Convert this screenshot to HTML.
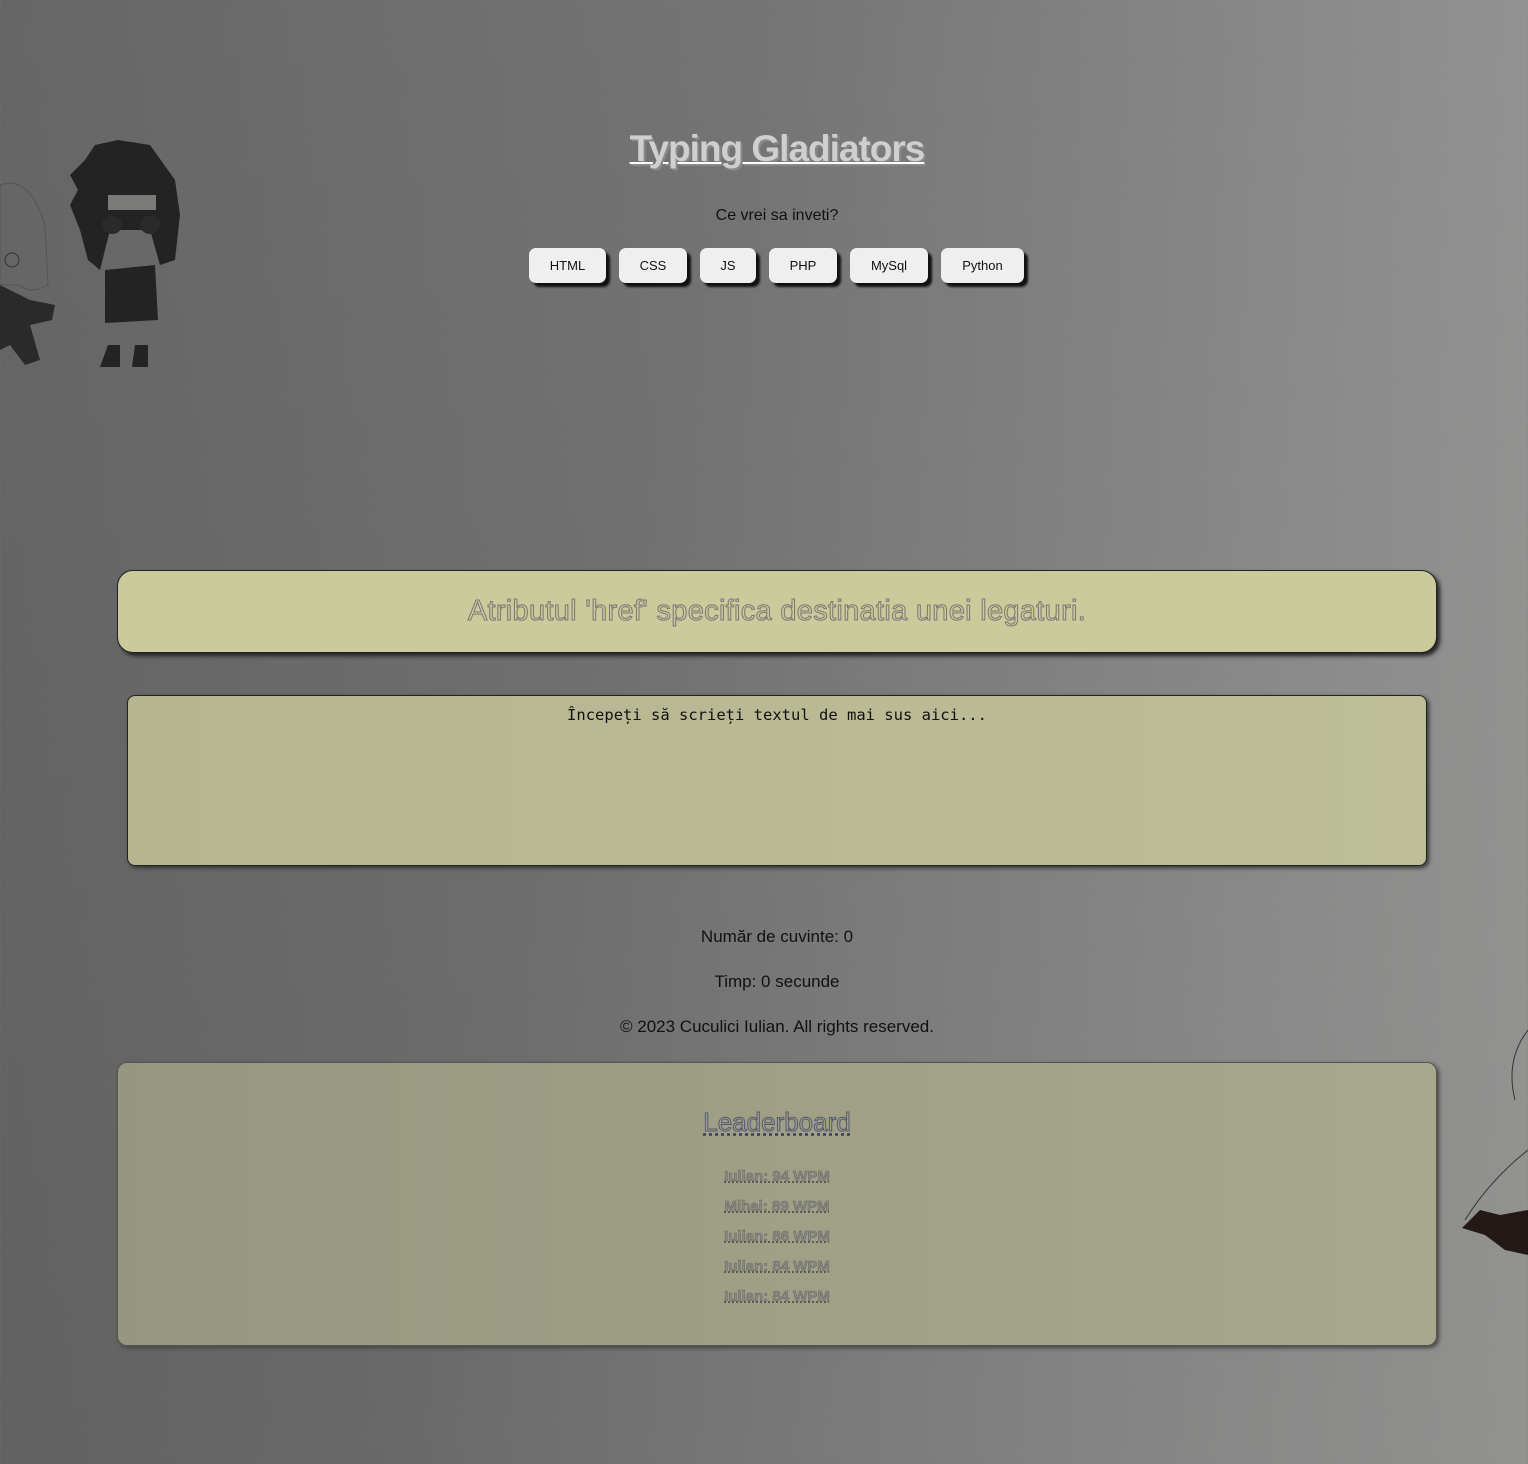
<!DOCTYPE html>
<html><head><meta charset="utf-8"><style>
html,body{margin:0;padding:0}
body{width:1528px;height:1464px;position:relative;overflow:hidden;
background:linear-gradient(105deg,#606060 0%,#6f6f6f 40%,#8a8a8a 75%,#9b9b99 100%);
font-family:"Liberation Sans",sans-serif;}
.ov{position:absolute;inset:0;background:linear-gradient(180deg,rgba(255,255,255,0.04),rgba(0,0,0,0.06));}
h1{position:absolute;top:128px;left:0;width:1554px;text-align:center;margin:0;font-size:37px;font-weight:bold;color:#cfcfcf;text-decoration:underline;text-decoration-color:#fff;text-decoration-thickness:2px;text-shadow:2px 2px 0 #888;letter-spacing:-1px}
.q{position:absolute;top:207px;left:0;width:1554px;text-align:center;font-size:16px;color:#111}
.btns{position:absolute;top:248px;left:529px;display:flex;gap:13px}
.btns div{height:35px;line-height:35px;background:#efefef;border-radius:7px;font-size:13px;color:#111;text-align:center;box-shadow:4px 4px 2px #111}
.quote{position:absolute;left:117px;top:570px;width:1318px;height:81px;background:#cbca9a;border:1px solid #222;border-radius:16px;box-shadow:3px 3px 4px #222;text-align:center;line-height:80px;font-size:29px;color:#cbca9a;-webkit-text-stroke:1px #777;letter-spacing:0.3px}
.ta{position:absolute;left:127px;top:695px;width:1300px;background:linear-gradient(90deg,#b5b591,#bdbe98);border:1px solid #222;border-radius:8px;box-shadow:2px 2px 4px #333;font-family:"DejaVu Sans Mono","Liberation Mono",monospace;font-size:15.5px;color:#111;text-align:center;padding-top:10px;box-sizing:border-box;height:171px}
.st{position:absolute;left:0;width:1554px;text-align:center;font-size:17px;color:#111}
.lb{position:absolute;left:117px;top:1062px;width:1318px;height:282px;background:linear-gradient(90deg,#979780,#a8a88c);border:1px solid #555;border-radius:10px;box-shadow:2px 2px 4px #444}
.lb h2{margin:0;position:absolute;top:44px;width:100%;text-align:center;font-size:26px;color:#a0a088;-webkit-text-stroke:1px #555a70;text-decoration:underline dotted #3a3a60;font-weight:normal}
.lb p{margin:0;position:absolute;width:100%;text-align:center;font-size:15px;font-weight:bold;color:#8a8a84;-webkit-text-stroke:0.5px #666;text-decoration:underline dotted #444}
</style></head><body>
<div class="ov"></div>
<svg style="position:absolute;left:0;top:135px" width="190" height="240">
<path d="M0 50 Q30 40 45 90 L48 150 Q30 160 20 150 L0 150Z" fill="none" stroke="#555" stroke-width="1"/>
<path d="M0 150 L30 165 L55 170 L52 185 L30 190 L40 225 L25 230 L10 210 L0 215Z" fill="#2a2a2a"/>
<circle cx="12" cy="125" r="7" fill="none" stroke="#333"/>
<path d="M70 40 L85 25 L95 10 L118 5 L150 10 L175 45 L180 80 L175 125 L160 130 L150 95 L110 95 L100 135 L88 125 L80 95 L70 70 L78 55Z" fill="#232323"/>
<rect x="108" y="60" width="48" height="15" fill="#7a7a78"/>
<ellipse cx="112" cy="90" rx="10" ry="9" fill="#2a2a2a"/><ellipse cx="150" cy="90" rx="10" ry="9" fill="#2a2a2a"/>
<path d="M105 135 L155 130 L158 185 L105 188Z" fill="#232323"/>
<path d="M108 210 L120 210 L120 232 L100 232Z M135 210 L148 210 L148 232 L132 232Z" fill="#232323"/>
</svg>
<svg style="position:absolute;left:1460px;top:1020px" width="68" height="240">
<path d="M68 10 Q45 40 55 80 M68 130 Q30 160 5 200" fill="none" stroke="#333" stroke-width="1"/>
<path d="M2 208 L20 190 L40 195 L68 190 L68 235 L45 230 L25 215Z" fill="#231a18"/>
</svg>
<h1>Typing Gladiators</h1>
<div class="q">Ce vrei sa inveti?</div>
<div class="btns">
<div style="width:77px">HTML</div><div style="width:68px">CSS</div><div style="width:56px">JS</div><div style="width:68px">PHP</div><div style="width:78px">MySql</div><div style="width:83px">Python</div>
</div>
<div class="quote">Atributul 'href' specifica destinatia unei legaturi.</div>
<div class="ta">Începeți să scrieți textul de mai sus aici...</div>
<div class="st" style="top:927px">Număr de cuvinte: 0</div>
<div class="st" style="top:972px">Timp: 0 secunde</div>
<div class="st" style="top:1017px">© 2023 Cuculici Iulian. All rights reserved.</div>
<div class="lb">
<h2>Leaderboard</h2>
<p style="top:105px">Iulian: 94 WPM</p>
<p style="top:135px">Mihai: 89 WPM</p>
<p style="top:165px">Iulian: 86 WPM</p>
<p style="top:195px">Iulian: 84 WPM</p>
<p style="top:225px">Iulian: 84 WPM</p>
</div>
</body></html>
